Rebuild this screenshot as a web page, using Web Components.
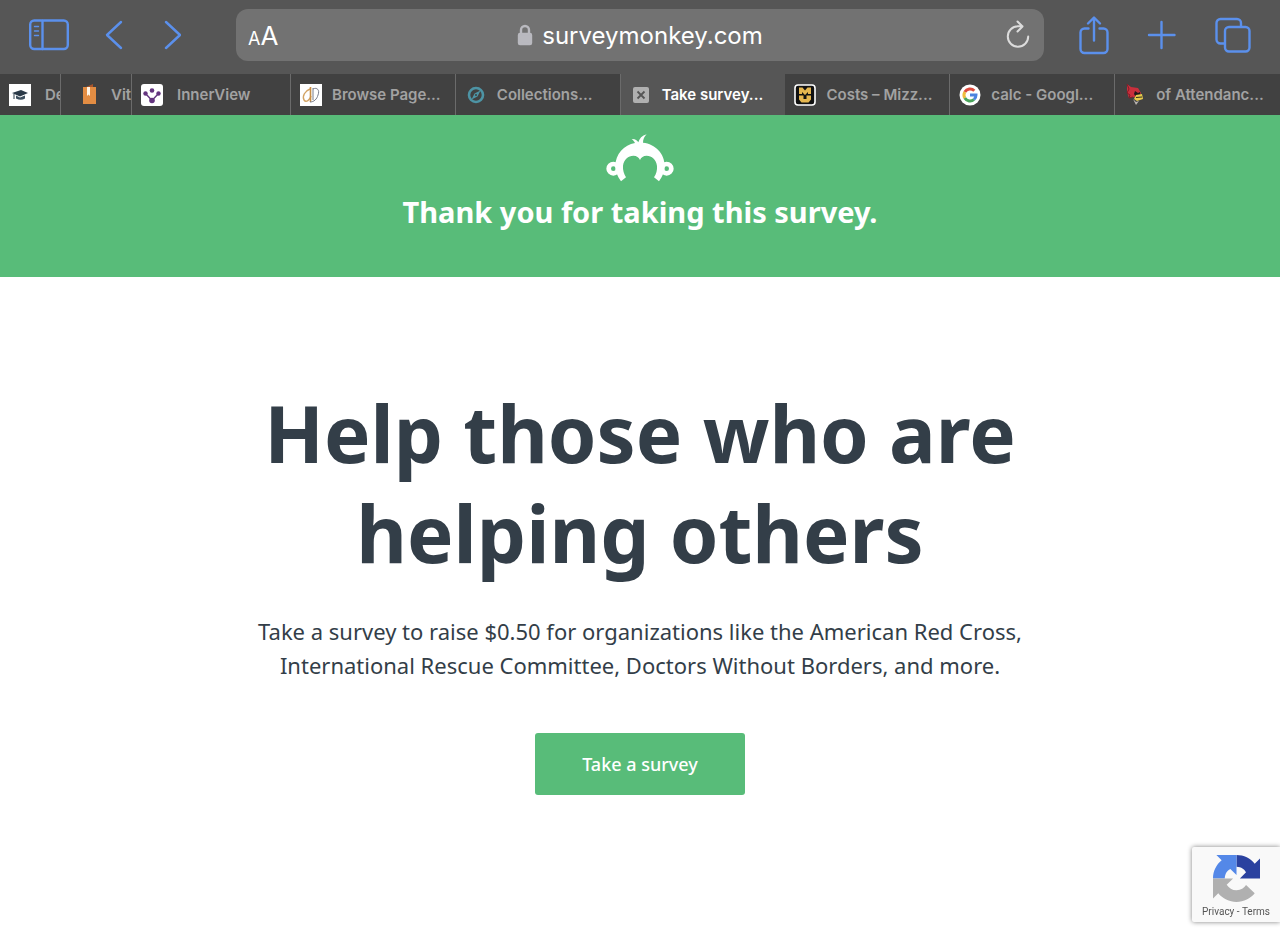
<!DOCTYPE html>
<html lang="en">
<head>
<meta charset="utf-8">
<meta name="viewport" content="width=device-width, initial-scale=1">
<title>Take survey</title>
<style>
:root {
    --ui: Inter, "Liberation Sans", sans-serif;
    --text: "Noto Sans", "Open Sans", sans-serif;
    --green: #58bc79;
    --ink: #333e48;
    --chrome: #565656;
    --chrome-dark: #414141;
    --accent: #5b90ec;
}
body {
    margin: 0;
    background: #fff;
    font-family: var(--text);
    color: var(--ink);
}
</style>
</head>
<body>
<browser-toolbar>surveymonkey.com</browser-toolbar>

<tab-strip>
    <browser-tab class="piled">
        <svg slot="icon" viewBox="0 0 22 22"><path fill="#fff" d="M0 0h22v22H0z"/><path fill="#2b3a48" d="M3 9l9-3 7 3-8 3.500z"/><path fill="#3d4f5e" d="M7 11.500l4 2 5-2v3q-4 2.500-9 0z"/><path d="M5 10v5" stroke="#2b3a48"/></svg>
        Degrees
    </browser-tab>
    <browser-tab class="tucked">
        <svg slot="icon" viewBox="0 0 22 22"><path fill="#a9552b" d="M7 3l7-3v4H7z"/><path fill="#e38d43" d="M4 3h13v17H4z"/><path fill="#fff4e4" d="M8 3h3v9l-1.500-1.500L8 12z"/></svg>
        Vital
    </browser-tab>
    <browser-tab class="piled">
        <svg slot="icon" viewBox="0 0 22 22"><rect width="22" height="22" rx="3" fill="#fff"/><g fill="#63347e"><circle cx="11" cy="6.500" r="2.300"/><circle cx="4.500" cy="9.500" r="2.200"/><circle cx="17.500" cy="9.500" r="2.200"/><circle cx="11" cy="16.500" r="2.800"/></g><path d="M4.500 9.500L11 16.500l6.500-7" fill="none" stroke="#63347e" stroke-width="1.400"/></svg>
        InnerView
    </browser-tab>
    <browser-tab>
        <svg slot="icon" viewBox="0 0 22 22"><path fill="#fff" d="M0 0h22v22H0z"/><g fill="none"><path d="M10 5C5 7 2 12 4 16c2 3 6 0 7-4" stroke="#d3a363" stroke-width="1.400"/><path d="M10.500 3v15" stroke="#c78d43" stroke-width="1.600"/><path d="M13 5c4-2 7 1 5 6-1 4-4 7-8 7M13 4v12" stroke="#777c8b"/></g></svg>
        Browse Page...
    </browser-tab>
    <browser-tab>
        <svg slot="icon" viewBox="0 0 22 22"><circle cx="11" cy="11" r="7" fill="none" stroke="#4d94a5" stroke-width="2.600"/><path d="M15.500 6.500L12.500 12.500l-6 3 3-6z" fill="#4d94a5"/><circle cx="11" cy="11" r="1" fill="#414141"/></svg>
        Collections...
    </browser-tab>
    <browser-tab active>
        <svg slot="icon" viewBox="0 0 22 22"><rect x="3" y="3" width="16" height="16" rx="2" fill="#b0b0b0"/><path d="M7.500 7.500l7 7m0-7l-7 7" stroke="#555" stroke-width="1.800"/></svg>
        Take survey...
    </browser-tab>
    <browser-tab>
        <svg slot="icon" viewBox="0 0 22 22"><rect x="1" y="1" width="20" height="20" rx="3" fill="#111" stroke="#fff" stroke-width="1.600"/><path d="M5 3.500h3.500l2.500 3 2.500-3H17V10h-3V8l-3 3-3-3v2H5zM5 11.500h4.500v3.500h3v-3.500H17v4l-2.500 3h-7L5 15.500z" fill="#e5b64f"/></svg>
        Costs – Mizz...
    </browser-tab>
    <browser-tab>
        <svg slot="icon" viewBox="0 0 22 22"><circle cx="11" cy="11" r="10.500" fill="#fff"/><g fill="none" stroke-width="3"><path d="M15.300 6.700A6 6 0 0 0 5.800 8" stroke="#dc4b3e"/><path d="M5.800 8a6 6 0 0 0 0 6" stroke="#efbd3c"/><path d="M5.800 14a6 6 0 0 0 9.200 1.500" stroke="#4aa45b"/><path d="M15 15.500a6 6 0 0 0 2-4.500h-6" stroke="#4c83df"/></g></svg>
        calc - Googl...
    </browser-tab>
    <browser-tab>
        <svg slot="icon" viewBox="0 0 22 22"><path d="M3 0l4 3 7 1 3 5-3 5-5-1-4 1-2-6z" fill="#c92f3c"/><path d="M3 0l2 5-2 4 3 2-1 3 4-1" fill="none" stroke="#7d1d27"/><path d="M11 7l3 2 2-1v4l-4 1-2-3z" fill="#20191b"/><path d="M12 11l6-1 1 5-6 2-3-2z" fill="#e8ca4b"/><path d="M12 13.500l6-.5" stroke="#332"/><path d="M9 15l3 3 3-1-3 4z" fill="#b8b3b1"/></svg>
        of Attendanc...
    </browser-tab>
</tab-strip>

<survey-banner>Thank you for taking this survey.</survey-banner>

<survey-offer>
    <span slot="title">Help those who are helping others</span>
    Take a survey to raise $0.50 for organizations like the American Red Cross, International Rescue Committee, Doctors Without Borders, and more.
    <span slot="action">Take a survey</span>
</survey-offer>

<captcha-badge></captcha-badge>

<script>
const toolbarTemplate = document.createElement("template");
toolbarTemplate.innerHTML = `
<style>
:host {
    display: grid;
    grid-template-columns: 236px 1fr 236px;
    align-items: center;
    box-sizing: border-box;
    height: 74px;
    padding-bottom: 4px;
    background: var(--chrome);
    font-family: var(--ui);
}
.group {
    display: flex;
    align-items: center;
    padding: 0 29px;
    gap: 36px;
}
.group--end {
    padding: 0 29px 0 35px;
    gap: 38px;
}
button {
    display: flex;
    padding: 0;
    border: 0;
    background: none;
    color: var(--accent);
    cursor: pointer;
}
svg {
    display: block;
    fill: none;
    stroke: currentColor;
    stroke-width: 2.400;
    stroke-linecap: round;
    stroke-linejoin: round;
}
.address {
    display: grid;
    grid-template-columns: 1fr auto 1fr;
    align-items: center;
    height: 52px;
    padding: 0 12px;
    border-radius: 12px;
    background: #727272;
    color: #fff;
}
.address button {
    color: #fff;
    font: 18px var(--ui);
    align-items: baseline;
    justify-self: start;
}
.address button b {
    font-size: 26px;
    font-weight: 400;
}
.address .reload {
    justify-self: end;
    color: #dcdcdc;
}
.site {
    display: flex;
    align-items: center;
    gap: 9px;
    font-size: 24px;
}
.lock {
    fill: #b9b9bf;
    stroke: #b9b9bf;
}
</style>
<nav class="group" aria-label="History">
    <button aria-label="Sidebar"><svg width="40" height="32" viewBox="0 0 40 32"><rect x="1.200" y="1.500" width="37.600" height="28.500" rx="4"/><path d="M13.500 2v28"/><path d="M5.500 7.500h4M5.500 12h4M5.500 16.500h4" stroke-width="1.400"/></svg></button>
    <button aria-label="Back"><svg width="20" height="32" viewBox="0 0 20 32"><path d="M16 3L2 16l14 13"/></svg></button>
    <button aria-label="Forward"><svg width="20" height="32" viewBox="0 0 20 32"><path d="M5 3l14 13L5 29"/></svg></button>
</nav>
<div class="address">
    <button aria-label="Page settings">A<b>A</b></button>
    <div class="site">
        <svg class="lock" width="16" height="22" viewBox="0 0 16 22"><rect x="2" y="10" width="12" height="10" rx="1"/><path d="M4 10V6a4 4 0 0 1 8 0v4" fill="none"/></svg>
        <slot></slot>
    </div>
    <button class="reload" aria-label="Reload"><svg width="28" height="30" viewBox="0 0 28 30"><path d="M24.200 16.500A10.200 10.200 0 1 1 14 6.300h4.500M13.500 1.500l5 5-5 5" stroke-width="2"/></svg></button>
</div>
<div class="group group--end">
    <button aria-label="Share"><svg width="30" height="40" viewBox="0 0 30 40"><path d="M9.500 13.500H5.500a4 4 0 0 0-4 4V34a4 4 0 0 0 4 4h19a4 4 0 0 0 4-4V17.500a4 4 0 0 0-4-4h-4M15 25.500V3M9 8.500l6-6 6 6"/></svg></button>
    <button aria-label="New tab"><svg width="30" height="32" viewBox="0 0 30 32"><path d="M2 16h25.500M14.500 3v26"/></svg></button>
    <button aria-label="All tabs"><svg width="36" height="36" viewBox="0 0 36 36"><rect x="10" y="10" width="24.500" height="24.500" rx="4"/><path d="M9.500 26.500H5.500a4 4 0 0 1-4-4V6a4 4 0 0 1 4-4h16.500a4 4 0 0 1 4 4v3.500"/></svg></button>
</div>
`;

const tabTemplate = document.createElement("template");
tabTemplate.innerHTML = `
<style>
:host {
    display: block;
    min-width: 0;
    box-sizing: border-box;
    border-right: 1px solid #6b6b6b;
    background: var(--chrome-dark);
    color: #a2a2a2;
}
:host([active]) {
    background: var(--chrome);
    border-color: var(--chrome);
    color: #fff;
}
:host(:last-child) {
    border: 0;
}
button {
    display: flex;
    align-items: center;
    gap: var(--tab-gap, 10px);
    box-sizing: border-box;
    width: 100%;
    height: 41px;
    padding: 0 0 0 var(--tab-inset, 9px);
    border: 0;
    background: none;
    color: inherit;
    font: 600 15px/20px var(--ui);
    white-space: nowrap;
    overflow: hidden;
}
::slotted(svg) {
    display: block;
    flex: none;
    width: 22px;
    height: 22px;
}
</style>
<button><slot name="icon"></slot><span><slot></slot></span></button>
`;

const stripTemplate = document.createElement("template");
stripTemplate.innerHTML = `
<style>
:host {
    display: grid;
    grid-template-columns: 61px 71px 159px repeat(6, minmax(0, 1fr));
    background: var(--chrome-dark);
}
::slotted(.piled) {
    --tab-gap: 14px;
}
::slotted(.tucked) {
    --tab-inset: 18px;
}
</style>
<slot></slot>
`;

const bannerTemplate = document.createElement("template");
bannerTemplate.innerHTML = `
<style>
:host {
    display: flex;
    flex-direction: column;
    align-items: center;
    padding: 19px 24px 46px;
    background: var(--green);
    color: #fff;
}
h2 {
    margin: 10px 0 0;
    font-size: 29px;
    font-weight: 700;
    line-height: 39px;
    text-align: center;
}
svg {
    display: block;
}
</style>
<svg width="68" height="48" viewBox="48 42 204 144" fill="#fff" role="img" aria-label="Logo">
    <path d="M93 184C82 170 76 152 76 138c0-36 26-63 59-69-3-6-6-9-10-12 10-1 16 3 20 10 3-11 11-20 25-24-7 6-11 15-11 25 37 4 65 32 65 70 0 14-6 32-17 46l-15-12c7-10 10-22 9-34-2-19-16-31-31-31-10 0-17 5-20 13-3-8-10-13-20-13-15 0-29 12-31 31-1 12 3 24 9 34z"/>
    <g fill="none" stroke="#fff" stroke-width="14">
        <circle cx="70" cy="146" r="14"/>
        <circle cx="230" cy="146" r="14"/>
    </g>
</svg>
<h2><slot></slot></h2>
`;

const offerTemplate = document.createElement("template");
offerTemplate.innerHTML = `
<style>
:host {
    display: flex;
    flex-direction: column;
    align-items: center;
    max-width: 800px;
    margin: 0 auto;
    padding: 106px 24px;
    text-align: center;
}
h1 {
    margin: 0;
    font-size: 78px;
    font-weight: 700;
    line-height: 100px;
}
p {
    margin: 31px 0 51px;
    font-size: 22px;
    line-height: 34px;
}
a {
    padding: 16px 47px;
    border-radius: 3px;
    background: var(--green);
    color: #fff;
    font-size: 18px;
    font-weight: 500;
    line-height: 30px;
    text-decoration: none;
}
</style>
<h1><slot name="title"></slot></h1>
<p><slot></slot></p>
<a href="#survey"><slot name="action"></slot></a>
`;

const badgeTemplate = document.createElement("template");
badgeTemplate.innerHTML = `
<style>
:host {
    position: fixed;
    right: 0;
    bottom: 16px;
    display: flex;
    flex-direction: column;
    align-items: center;
    gap: 4px;
    padding: 8px 10px 4px;
    border-radius: 2px 0 0 2px;
    background: #f9f9f9;
    box-shadow: 0 0 5px #808080;
    color: #555;
    font: 10px/12px Roboto, sans-serif;
}
svg {
    display: block;
}
a {
    color: inherit;
    text-decoration: none;
}
</style>
<svg width="47" height="47" viewBox="0 0 64 64" role="img" aria-label="reCAPTCHA">
    <path fill="#2a419f" d="M32 0c10 0 19 4.600 24.800 11.800L64 4.600V32H36.600l8.400-8.400C42.500 19 39 16.500 32 16z"/>
    <path fill="#5488e8" d="M32 0H4.600l7.200 7.200C4.600 13 0 22 0 32h16c.500-7 3-10.500 7.600-13l8.400 8.400z"/>
    <path fill="#b0b0b0" d="M0 32v27.400l7.200-7.200C13 59.400 22 64 32 64s19-4.600 24.800-11.800L45 41c-2.500 4-7 7-13 7s-10-3-13.400-7.600l8.800-8.400z"/>
</svg>
<div><a href="#privacy">Privacy</a> - <a href="#terms">Terms</a></div>
`;

function register(name, template) {
  customElements.define(
    name,
    class extends HTMLElement {
      constructor() {
        super();
        this.attachShadow({ mode: "open" }).appendChild(template.content.cloneNode(true));
      }
    }
  );
}

register("browser-toolbar", toolbarTemplate);
register("browser-tab", tabTemplate);
register("tab-strip", stripTemplate);
register("survey-banner", bannerTemplate);
register("survey-offer", offerTemplate);
register("captcha-badge", badgeTemplate);
</script>
</body>
</html>
